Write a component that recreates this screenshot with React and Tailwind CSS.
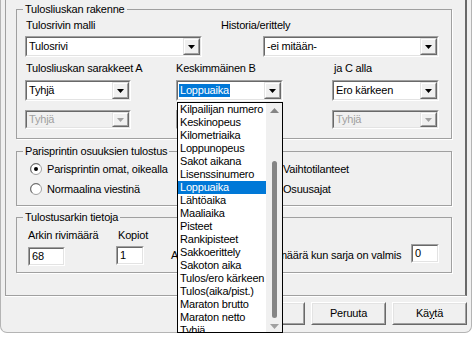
import React from "react";

const sunkenOuter = "border border-t-[#a0a0a0] border-l-[#a0a0a0] border-r-white border-b-white";
const sunkenInner = "border border-t-[#696969] border-l-[#696969] border-r-[#e3e3e3] border-b-[#e3e3e3]";

const items = [
  "Kilpailijan numero",
  "Keskinopeus",
  "Kilometriaika",
  "Loppunopeus",
  "Sakot aikana",
  "Lisenssinumero",
  "Loppuaika",
  "Lähtöaika",
  "Maaliaika",
  "Pisteet",
  "Rankipisteet",
  "Sakkoerittely",
  "Sakoton aika",
  "Tulos/ero kärkeen",
  "Tulos(aika/pist.)",
  "Maraton brutto",
  "Maraton netto",
  "Tyhjä",
];

const DropButton = ({ disabled }) => (
  <div className="w-[17px] h-full border border-t-[#e3e3e3] border-l-[#e3e3e3] border-r-[#696969] border-b-[#696969]">
    <div className="h-full border border-t-white border-l-white border-r-[#a0a0a0] border-b-[#a0a0a0] bg-[#f0f0f0] flex items-center justify-center">
      <svg width="7" height="4" viewBox="0 0 7 4">
        <path d="M0 0h7L3.5 4z" fill={disabled ? "#a0a0a0" : "#000"} />
      </svg>
    </div>
  </div>
);

const Combo = ({ value, className, disabled, highlight }) => (
  <div className={`${sunkenOuter} ${className}`}>
    <div className={`${sunkenInner} flex h-full ${disabled ? "bg-[#f0f0f0]" : "bg-white"}`}>
      <div className="flex-1 flex items-center pl-[1px] overflow-hidden whitespace-nowrap">
        <span
          className={
            highlight
              ? "bg-[#0078d7] text-white px-[1px]"
              : disabled
              ? "text-[#a0a0a0] px-[1px]"
              : "px-[1px]"
          }
        >
          {value}
        </span>
      </div>
      <DropButton disabled={disabled} />
    </div>
  </div>
);

const Field = ({ value, className }) => (
  <div className={`${sunkenOuter} ${className}`}>
    <div className={`${sunkenInner} h-full bg-white flex items-center pl-[2px]`}>{value}</div>
  </div>
);

const Radio = ({ checked }) => (
  <svg width="12" height="12" viewBox="0 0 12 12" className="shrink-0">
    <circle cx="6" cy="6" r="5.5" fill="#fff" stroke="#a0a0a0" />
    <path d="M2.2 9.8A5 5 0 0 1 9.8 2.2" fill="none" stroke="#696969" />
    {checked && <circle cx="6" cy="6" r="2" fill="#000" />}
  </svg>
);

const Btn = ({ children }) => (
  <div className="w-[75px] h-[23px] border border-t-white border-l-white border-r-[#696969] border-b-[#696969]">
    <div className="h-full border border-t-[#e3e3e3] border-l-[#e3e3e3] border-r-[#a0a0a0] border-b-[#a0a0a0] flex items-center justify-center">
      {children}
    </div>
  </div>
);

const App = () => {
  return (
    <div className="relative w-[472px] h-[353px] bg-white overflow-hidden font-['Liberation_Sans',Arial,sans-serif] text-[11px] leading-[13px] tracking-[-0.2px] text-black">
      <div className="h-[333px] bg-[#f0f0f0] border-x border-b border-[#b4b4b4] rounded-b-[7px] flex flex-col">
        {/* Tab page */}
        <div className="ml-[4px] w-[462px] h-[296px] shrink-0 border-l border-l-[#a0a0a0] border-r-2 border-r-[#696969] border-b border-b-[#a0a0a0] shadow-[0_1px_0_white] flex flex-col">
          {/* Tulosliuskan rakenne */}
          <fieldset className="ml-[10px] mt-[3px] w-[436px] h-[136px] border border-[#a0a0a0] shadow-[1px_1px_0_white]">
            <legend className="ml-[6px] px-[2px] leading-[13px]">Tulosliuskan rakenne</legend>
            <div className="flex h-[13px] mt-[3px]">
              <span className="ml-[9px] w-[195px]">Tulosrivin malli</span>
              <span>Historia/erittely</span>
            </div>
            <div className="flex mt-[4px]">
              <Combo value="Tulosrivi" className="ml-[8px] w-[177px] h-[21px]" />
              <Combo value="-ei mitään-" className="ml-[61px] w-[176px] h-[21px]" />
            </div>
            <div className="flex h-[13px] mt-[5px]">
              <span className="ml-[9px] w-[150px]">Tulosliuskan sarakkeet A</span>
              <span className="w-[158px]">Keskimmäinen B</span>
              <span>ja C alla</span>
            </div>
            <div className="flex mt-[5px]">
              <Combo value="Tyhjä" className="ml-[8px] w-[106px] h-[21px]" />
              <Combo value="Loppuaika" highlight className="ml-[45px] w-[107px] h-[21px]" />
              <Combo value="Ero kärkeen" className="ml-[49px] w-[107px] h-[21px]" />
            </div>
            <div className="flex mt-[9px]">
              <Combo value="Tyhjä" disabled className="ml-[8px] w-[106px] h-[19px]" />
              <Combo value="Tyhjä" disabled className="ml-[45px] w-[107px] h-[19px]" />
              <Combo value="Tyhjä" disabled className="ml-[49px] w-[107px] h-[19px]" />
            </div>
          </fieldset>

          {/* Parisprintin osuuksien tulostus */}
          <fieldset className="ml-[10px] mt-[6px] w-[436px] h-[61px] border border-[#a0a0a0] shadow-[1px_1px_0_white]">
            <legend className="ml-[6px] px-[2px] leading-[13px]">Parisprintin osuuksien tulostus</legend>
            <div className="flex h-[16px] mt-[3px] items-center">
              <div className="ml-[13px] w-[236px] flex items-center gap-[5px]">
                <Radio checked />
                <span>Parisprintin omat, oikealla</span>
              </div>
              <div className="flex items-center gap-[5px]">
                <Radio />
                <span>Vaihtotilanteet</span>
              </div>
            </div>
            <div className="flex h-[16px] mt-[4px] items-center">
              <div className="ml-[13px] w-[236px] flex items-center gap-[5px]">
                <Radio />
                <span>Normaalina viestinä</span>
              </div>
              <div className="flex items-center gap-[5px]">
                <Radio />
                <span>Osuusajat</span>
              </div>
            </div>
          </fieldset>

          {/* Tulostusarkin tietoja */}
          <fieldset className="ml-[10px] mt-[5px] w-[436px] h-[62px] border border-[#a0a0a0] shadow-[1px_1px_0_white]">
            <legend className="ml-[6px] px-[2px] leading-[13px]">Tulostusarkin tietoja</legend>
            <div className="flex h-[13px] mt-[5px]">
              <span className="ml-[11px] w-[90px]">Arkin rivimäärä</span>
              <span>Kopiot</span>
            </div>
            <div className="flex mt-[4px] items-start">
              <Field value="68" className="ml-[11px] w-[37px] h-[19px] mt-[1px]" />
              <Field value="1" className="ml-[51px] w-[28px] h-[19px]" />
              <span className="ml-[27px] w-[240px] mt-[3px] whitespace-nowrap">
                Automaattitulostuksen määrä kun sarja on valmis
              </span>
              <Field value="0" className="w-[28px] h-[19px] -mt-[2px]" />
            </div>
          </fieldset>
        </div>

        {/* Buttons */}
        <div className="flex justify-end gap-[6px] mt-[6px] pr-[4px]">
          <Btn>OK</Btn>
          <Btn>Peruuta</Btn>
          <Btn>
            <span>
              Kä<span className="underline">y</span>tä
            </span>
          </Btn>
        </div>
      </div>

      {/* Open dropdown list of Keskimmäinen B */}
      <div className="absolute left-[177px] top-[102px] w-[106px] h-[231px] border border-black bg-white overflow-hidden flex">
        <div className="flex-1 flex flex-col">
          {items.map((it) => (
            <div
              key={it}
              className={`h-[13px] shrink-0 pl-[2px] whitespace-nowrap ${
                it === "Loppuaika" ? "bg-[#0078d7] text-white" : ""
              }`}
            >
              {it}
            </div>
          ))}
        </div>
        <div className="w-[16px] bg-[#f0f0f0] flex flex-col items-center">
          <svg width="9" height="5" viewBox="0 0 9 5" className="mt-[5px]">
            <path d="M0 5L4.5 0L9 5z" fill="#858585" />
          </svg>
          <div className="mt-[48px] w-[5px] h-[157px] rounded-full bg-[#858585]" />
          <svg width="9" height="5" viewBox="0 0 9 5" className="mt-[6px]">
            <path d="M0 0h9L4.5 5z" fill="#a0a0a0" />
          </svg>
        </div>
      </div>
    </div>
  );
};

export default App;
